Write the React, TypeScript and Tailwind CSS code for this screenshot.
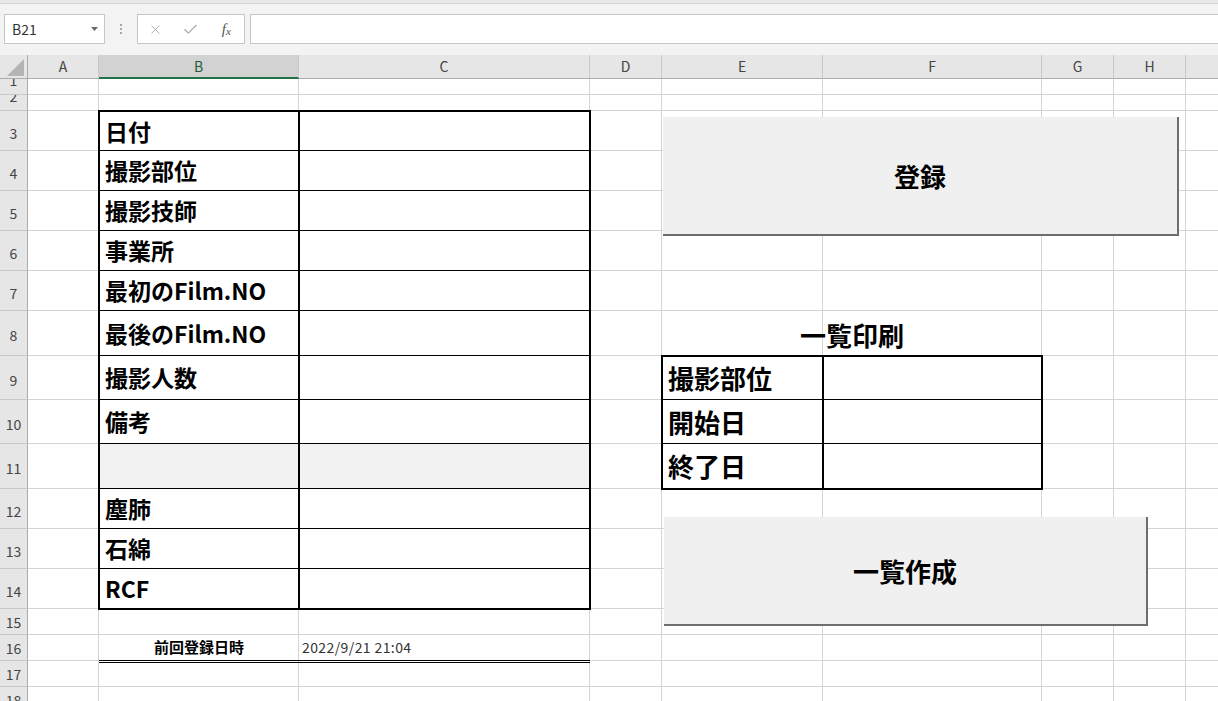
import { Fragment } from "react";
import { X, Check } from "lucide-react";

const COLS = ["", "A", "B", "C", "D", "E", "F", "G", "H", ""];
const ROW_H = [16, 16, 40, 40, 40, 40, 40, 45, 44, 44, 45, 40, 40, 40, 26, 26, 26, 26];

const SHEET =
  "grid grid-cols-[28px_71px_200px_291px_72px_161px_219px_72px_72px_72px] grid-rows-[24px_16px_16px_40px_40px_40px_40px_40px_45px_44px_44px_45px_40px_40px_40px_26px_26px_26px_26px]";

const HDR =
  "bg-[#e6e6e6] border-r border-b border-r-[#c8c8c8] border-b-[#ababab] flex items-center justify-center text-[14px] text-[#444]";
const HDR_SEL =
  "bg-[#d2d2d2] border-r border-b-2 border-r-[#c8c8c8] border-b-[#217346] flex items-center justify-center text-[14px] text-[#1f5c3a]";

const LABEL = "text-[23px] font-bold text-black leading-none";
const LABEL_L = "text-[26px] font-bold text-black leading-none";

const mainRows = [
  "日付",
  "撮影部位",
  "撮影技師",
  "事業所",
  "最初のFilm.NO",
  "最後のFilm.NO",
  "撮影人数",
  "備考",
  "",
  "塵肺",
  "石綿",
  "RCF",
];

const printRows = ["撮影部位", "開始日", "終了日"];

function rowHeaderClass(r: number, h: number) {
  const base =
    "bg-[#e6e6e6] border-r border-b border-r-[#ababab] border-b-[#c8c8c8] flex justify-center overflow-hidden text-[14px] text-[#444]";
  if (r < 2) return base + " items-start";
  if (h >= 40) return base + " items-center pt-[4px]";
  return base + " items-center";
}

const Corner = () => (
  <div className="bg-[#e6e6e6] border-r border-b border-r-[#ababab] border-b-[#ababab]">
    <svg width="28" height="24" className="block">
      <path d="M24 4 L24 21 L7 21 Z" fill="#b4b4b4" />
    </svg>
  </div>
);

const FormulaBar = () => (
  <div className="h-[55px] bg-[#f3f3f3] flex flex-col">
    <div className="h-[4px] bg-[#e8e8e8] border-b border-[#d6d6d6]" />
    <div className="mt-[10px] h-[30px] flex">
      <div className="ml-[4px] w-[101px] bg-white border border-[#c6c6c6] flex items-center justify-between pl-[7px] pr-[6px] text-[14px] text-[#333]">
        <span>B21</span>
        <svg width="7" height="4">
          <path d="M0 0 H7 L3.5 4 Z" fill="#6a6a6a" />
        </svg>
      </div>
      <div className="w-[32px] flex flex-col items-center justify-center gap-[2px]">
        <span className="w-[2px] h-[2px] bg-[#a8a8a8]" />
        <span className="w-[2px] h-[2px] bg-[#a8a8a8]" />
        <span className="w-[2px] h-[2px] bg-[#a8a8a8]" />
      </div>
      <div className="w-[108px] bg-white border border-[#c6c6c6] flex items-center">
        <div className="w-[36px] flex justify-center">
          <X size={15} strokeWidth={1.4} color="#a8a8a8" />
        </div>
        <div className="w-[36px] flex justify-center">
          <Check size={17} strokeWidth={1.6} color="#a8a8a8" />
        </div>
        <div className="w-[36px] flex justify-center font-['Liberation_Serif',serif] italic text-[15px] text-[#555] leading-none">
          f<span className="text-[11px] mt-[4px]">x</span>
        </div>
      </div>
      <div className="ml-[5px] flex-1 bg-white border-y border-l border-[#c6c6c6]" />
    </div>
  </div>
);

const SheetButton = ({ label, className }: { label: string; className: string }) => (
  <div
    className={
      "absolute bg-[#f0f0f0] border-r-2 border-b-2 border-r-[#6e6e6e] border-b-[#6e6e6e] flex items-center justify-center " +
      className
    }
  >
    <span className={LABEL_L}>{label}</span>
  </div>
);

export default function App() {
  return (
    <div className="w-[1218px] h-[701px] overflow-hidden relative bg-white font-['Noto_Sans_CJK_JP','Noto_Sans',sans-serif]">
      <FormulaBar />

      <div className="grid">
        {/* gridlines + headers */}
        <div className={SHEET + " col-start-1 row-start-1"}>
          {COLS.map((c, i) =>
            i === 0 ? (
              <Corner key="corner" />
            ) : (
              <div key={i} className={i === 2 ? HDR_SEL : HDR}>
                {c}
              </div>
            )
          )}
          {ROW_H.map((h, r) => (
            <Fragment key={r}>
              <div className={rowHeaderClass(r, h)}>
                <span className={r < 2 ? "leading-none -mt-[6px]" : "leading-none"}>{r + 1}</span>
              </div>
              {COLS.slice(1).map((_, c) => (
                <div key={c} className="bg-white border-r border-b border-[#d4d4d4]" />
              ))}
            </Fragment>
          ))}
        </div>

        {/* cell contents and borders */}
        <div className={SHEET + " col-start-1 row-start-1"}>
          <div className="col-start-3 col-span-2 row-start-4 row-span-12 -m-px bg-white border-2 border-black grid grid-cols-[200px_1fr] grid-rows-[39px_40px_40px_40px_40px_45px_44px_44px_45px_40px_40px_1fr]">
            {mainRows.map((t, i) => {
              const last = i === mainRows.length - 1;
              const fill = t === "" ? " bg-[#f2f2f2]" : "";
              return (
                <Fragment key={i}>
                  <div
                    className={
                      "border-r-2 border-black flex items-center pl-[5px]" +
                      (last ? "" : " border-b border-b-black") +
                      fill
                    }
                  >
                    <span className={LABEL}>{t}</span>
                  </div>
                  <div className={(last ? "" : "border-b border-black") + fill} />
                </Fragment>
              );
            })}
          </div>

          <div className="col-start-6 col-span-2 row-start-9 flex items-center justify-center pt-[2px]">
            <span className={LABEL_L}>一覧印刷</span>
          </div>

          <div className="col-start-6 col-span-2 row-start-10 row-span-3 -m-px bg-white border-2 border-black grid grid-cols-[161px_1fr] grid-rows-[43px_44px_1fr]">
            {printRows.map((t, i) => {
              const last = i === printRows.length - 1;
              return (
                <Fragment key={t}>
                  <div
                    className={
                      "border-r-2 border-black flex items-center pl-[5px]" +
                      (last ? "" : " border-b border-b-black")
                    }
                  >
                    <span className={LABEL_L}>{t}</span>
                  </div>
                  <div className={last ? "" : "border-b border-black"} />
                </Fragment>
              );
            })}
          </div>

          <div className="col-start-3 col-span-2 row-start-17 -mb-[2px] border-b-[3px] border-double border-black grid grid-cols-[200px_1fr]">
            <div className="flex items-center justify-center text-[15px] font-bold text-black">前回登録日時</div>
            <div className="flex items-center pl-[3px] text-[14px] tracking-[0.4px] text-[#333]">2022/9/21 21:04</div>
          </div>
        </div>
      </div>

      <SheetButton label="登録" className="left-[663px] top-[117px] w-[516px] h-[119px]" />
      <SheetButton label="一覧作成" className="left-[664px] top-[517px] w-[484px] h-[109px]" />
    </div>
  );
}
